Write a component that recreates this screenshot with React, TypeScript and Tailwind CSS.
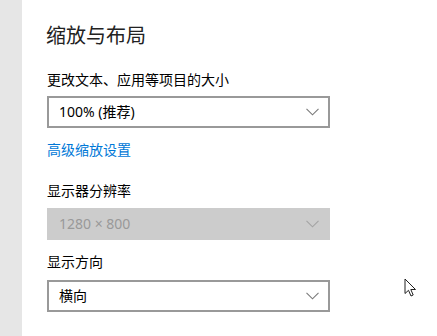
import React from "react";

const font = { fontFamily: '"Noto Sans", "Noto Sans CJK SC", sans-serif' };

function Chevron({ color }: { color: string }) {
  return (
    <svg width="13" height="8" viewBox="0 0 13 8" className="shrink-0">
      <polyline points="0.5,0.8 6.5,6.8 12.5,0.8" fill="none" stroke={color} strokeWidth="1.1" />
    </svg>
  );
}

function Select({ value, disabled }: { value: string; disabled?: boolean }) {
  return (
    <div
      className={
        disabled
          ? "w-[283px] h-[32px] flex items-center justify-between pl-[12px] pr-[11px] bg-[#cccccc] text-[#999999]"
          : "w-[283px] h-[32px] flex items-center justify-between pl-[10px] pr-[9px] border-2 border-[#999999] bg-white text-black"
      }
    >
      <span className="text-[14px] leading-[20px]">{value}</span>
      <Chevron color={disabled ? "#a3a3a3" : "#7a7a7a"} />
    </div>
  );
}

export default function App() {
  return (
    <div className="w-[437px] h-[336px] flex bg-white overflow-hidden relative" style={font}>
      <div className="w-[22px] h-full bg-[#e6e6e6] shrink-0" />
      <div className="flex flex-col pl-[25px] pt-[22px]">
        <h1 className="text-[20px] leading-[28px] text-[#222222] ml-[-1px]">缩放与布局</h1>
        <div className="mt-[20px] text-[14px] leading-[20px] text-black">更改文本、应用等项目的大小</div>
        <div className="mt-[6px]">
          <Select value="100% (推荐)" />
        </div>
        <div className="mt-[12px] text-[14px] leading-[20px] text-[#0078d7]">高级缩放设置</div>
        <div className="mt-[21px] text-[14px] leading-[20px] text-black">显示器分辨率</div>
        <div className="mt-[7px]">
          <Select value="1280 × 800" disabled />
        </div>
        <div className="mt-[12px] text-[14px] leading-[20px] text-black">显示方向</div>
        <div className="mt-[8px]">
          <Select value="横向" />
        </div>
      </div>
      <svg className="absolute left-[404px] top-[278px]" width="13" height="20" viewBox="0 0 13 20">
        <path
          d="M1 1 L1 15.5 L4.5 12.3 L7 18 L9.2 17 L6.8 11.5 L11.5 11.5 Z"
          fill="white"
          stroke="#222"
          strokeWidth="1"
          strokeLinejoin="miter"
        />
      </svg>
    </div>
  );
}
